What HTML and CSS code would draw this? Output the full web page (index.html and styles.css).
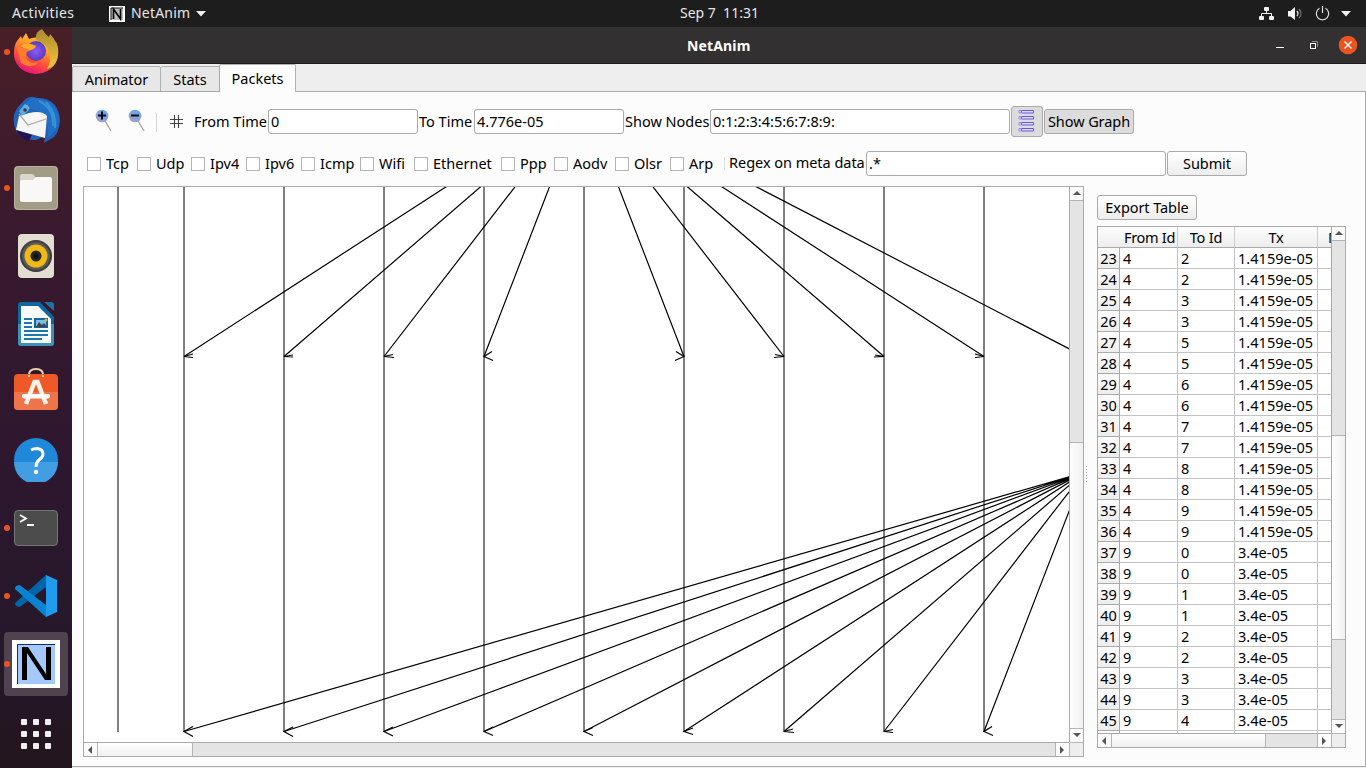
FILE: index.html
```
<!DOCTYPE html>
<html lang="en">
<head>
<meta charset="utf-8">
<title>NetAnim</title>
<link rel="stylesheet" href="styles.css">
</head>
<body>
<header class="topbar">
  <span class="activities">Activities</span>
  <svg class="appicon" width="16" height="16" viewBox="0 0 16 16"><rect width="16" height="16" fill="#fff"/><rect x="2" y="2" width="12" height="12" fill="#bbb"/><path d="M4.500 13V3L11.500 13V3" fill="none" stroke="#000" stroke-width="1.600"/><path d="M2 14V2H14" fill="none" stroke="#111"/></svg>
  <span class="appname">NetAnim</span>
  <svg class="caret" width="10" height="6"><path d="M0 0H10L5 5.500Z" fill="#eee"/></svg>
  <span class="clock">Sep 7&nbsp; 11:31</span>
  <svg class="tray" width="100" height="16" viewBox="0 0 100 16" fill="#f2f2f2">
    <rect x="6" y="1" width="5" height="4" rx="1"/><rect x="1" y="10" width="5" height="4" rx="1"/><rect x="11" y="10" width="5" height="4" rx="1"/>
    <path d="M8.500 4V7.500M3.500 11V7.500H13.500V11" fill="none" stroke="#f2f2f2"/>
    <path d="M30 5H32.500L37 1V14L32.500 10.500H30Z"/>
    <path d="M39 5Q41 7.500 39 10" fill="none" stroke="#ddd" stroke-width="1.300"/><path d="M41 3Q45 7.500 41 12" fill="none" stroke="#777" stroke-width="1.200"/>
    <path d="M61.500 2.300A6.200 6.200 0 1 0 67.500 2.300M64.500 0V7" fill="none" stroke="#ddd" stroke-width="1.200"/>
    <path d="M83 5H93L88 10.500Z"/>
  </svg>
</header>
<div class="desktop">
<nav class="dock">
  <div class="tile run"><svg width="48" height="48" viewBox="0 0 48 48">
    <defs><linearGradient id="ff" x1=".8" y1="0" x2=".3" y2="1"><stop offset="0" stop-color="#f5dc45"/><stop offset=".4" stop-color="#ff9a2b"/><stop offset=".7" stop-color="#ff4a3d"/><stop offset="1" stop-color="#e0127d"/></linearGradient>
    <linearGradient id="fy" x1="0" y1="0" x2="0" y2="1"><stop offset="0" stop-color="#a98a2e"/><stop offset="1" stop-color="#f5c83c"/></linearGradient><radialGradient id="fp"><stop offset="0" stop-color="#9059ff"/><stop offset="1" stop-color="#5b3db8"/></radialGradient></defs>
    <path d="M5 13L9 8L10 11L14 5L17 11Q24 7 34 13L44 14Q47 20 46 27A22 20 0 0 1 2 25Q2 17 5 13Z" fill="url(#ff)"/>
    <path d="M24 8Q24 4 30 1Q33 6 37 9L38 6Q46 14 46 24Q46 38 35 41Q41 30 36 21Q33 15 24 12Z" fill="url(#fy)"/>
    <circle cx="24" cy="23" r="10" fill="url(#fp)"/>
    <path d="M5 19Q12 13 19 17L24 18Q23 21 17 23Q13 24 14 30Q18 37 27 34Q19 42 9 35Z" fill="#ff7b2d"/><path d="M8 18Q16 13 24 18Q23 21 17 22Z" fill="#ffac28"/>
  </svg></div>
  <div class="tile"><svg width="48" height="48" viewBox="0 0 48 48">
    <path d="M4 35Q-3 17 10 7Q16 -2 25 2Q47 2 48 25Q47 36 42 41L32 47L33 40L24 44Q9 45 4 35Z" fill="#2460b5"/>
    <path d="M20 2Q45 2 47 24Q46 36 36 41L35 21Q25 12 14 13Q9 13 12 8Z" fill="#2270c6"/>
    <path d="M27 5Q42 12 41 30M34 6Q45 18 43 32" fill="none" stroke="#3593d8" stroke-width="2"/>
    <path d="M7 20L17 17Q30 14 35 20L33 42L4 34Z" fill="#f6f6f6"/><path d="M7 18L16 29L34 23" fill="none" stroke="#aaa" stroke-width="1.200"/>
    <path d="M4 34L20 39L17 45Q7 43 4 34Z" fill="#241450"/><path d="M7 15L13 8Q20 11 16 15L10 20Z" fill="#58aee5"/><circle cx="13" cy="14" r="1.800" fill="#4a3030"/>
  </svg></div>
  <div class="tile run"><svg width="44" height="44" viewBox="0 0 44 44"><rect width="44" height="44" rx="4" fill="#a29b86"/><rect x=".5" y=".5" width="43" height="43" rx="4" fill="none" stroke="#b9b29e"/><path d="M6 18V10Q6 8 8 8H18Q20 8 21 11H36V20H6Z" fill="#dad6c9"/><path d="M6 16Q6 14 8 14H19L22 11H36Q38 11 38 13V34Q38 36 36 36H8Q6 36 6 34Z" fill="#f9f8f6"/></svg></div>
  <div class="tile"><svg width="36" height="44" viewBox="0 0 36 44"><rect width="36" height="44" rx="4" fill="#e3ded2"/><circle cx="18" cy="22" r="16" fill="#3d3d3d"/><circle cx="18" cy="22" r="14" fill="#595959"/><circle cx="18" cy="22" r="11.500" fill="#efb917"/><circle cx="18" cy="22" r="5.500" fill="#272727"/><circle cx="18" cy="22" r="2.500" fill="#111"/></svg></div>
  <div class="tile"><svg width="36" height="44" viewBox="0 0 36 44"><path d="M3 0H22L36 15V41Q36 44 33 44H3Q0 44 0 41V3Q0 0 3 0Z" fill="#0d68a0"/><path d="M0 22H36V41Q36 44 33 44H3Q0 44 0 41Z" fill="#3e91bd"/><path d="M26 0H33Q36 0 36 3V9Z" fill="#1d72a3"/><path d="M3 4H20L33 17V41H3Z" fill="#f7fafc"/><path d="M6 17H14M6 21H14M6 25H14M6 29H30M6 33H30M6 37H24" stroke="#1b78ac" stroke-width="2"/><rect x="17" y="17" width="12" height="8" fill="#79c0e6" stroke="#1267a0" stroke-width="2"/><path d="M18 25L21 20L24 23L26 21L29 25Z" fill="#444"/><circle cx="28" cy="18" r="1.500" fill="#edb51e"/></svg></div>
  <div class="tile"><svg class="bag" width="44" height="44" viewBox="0 0 44 44"><path d="M15 10V8Q15 2 22 2Q29 2 29 8V10" fill="none" stroke="#ead3a5" stroke-width="2"/><rect y="7" width="44" height="36" rx="4" fill="#ed5a27"/><path d="M0 25H44V39Q44 43 40 43H4Q0 43 0 39Z" fill="#f0744a"/><path d="M15 10V8M29 10V8" stroke="#ead3a5" stroke-width="2"/><path d="M12 37L20.500 15H23.500L32 37" fill="none" stroke="#fff1e8" stroke-width="4.500"/><rect x="8" y="27" width="28" height="4.500" rx="2" fill="#fff"/></svg></div>
  <div class="tile"><svg width="44" height="44" viewBox="0 0 44 44"><circle cx="22" cy="22" r="22" fill="#1f88d9"/><path d="M0 24H44A22 22 0 0 1 0 24Z" fill="#429de2"/><path d="M17 12Q20 10.500 23 10.500Q29 11 29 16Q29 19 25 22Q22 24.500 22 29" fill="none" stroke="#fff" stroke-width="3"/><circle cx="22" cy="34" r="2.200" fill="#fff"/></svg></div>
  <div class="tile run"><svg width="44" height="36" viewBox="0 0 44 36"><rect x=".5" y=".5" width="43" height="35" rx="3.500" fill="#4c4c4c" stroke="#747474"/><path d="M6 5L12 8.500L6 12M13 15H20" fill="none" stroke="#fff" stroke-width="1.800"/></svg></div>
  <div class="tile run"><svg width="42" height="42" viewBox="0 0 42 42"><path d="M0 28Q0 30 1 31L4 32Q5 32 6 31L31 12V0Z" fill="#0065a9"/><path d="M0 14Q0 12 1 11L4 10Q5 10 6 11L31 30V42Z" fill="#0a84d0"/><path d="M31 0L42 5V37L31 42Z" fill="#1f9cf0"/></svg></div>
  <div class="tile run active"><svg width="48" height="48" viewBox="0 0 48 48"><rect width="48" height="48" fill="#fff"/><rect x="5" y="4" width="38" height="40" fill="#a4c8fa"/><path d="M5.500 44V4.500H43" fill="none" stroke="#0b2a83"/><path d="M10 40V7H16L34 34V7H39V40H33L15 13V40Z" fill="#000"/></svg></div>
  <div class="tile"><svg width="30" height="30" viewBox="0 0 30 30" fill="#f0eef0"><rect width="6" height="6" rx="1"/><rect x="12" width="6" height="6" rx="1"/><rect x="24" width="6" height="6" rx="1"/><rect y="12" width="6" height="6" rx="1"/><rect x="12" y="12" width="6" height="6" rx="1"/><rect x="24" y="12" width="6" height="6" rx="1"/><rect y="24" width="6" height="6" rx="1"/><rect x="12" y="24" width="6" height="6" rx="1"/><rect x="24" y="24" width="6" height="6" rx="1"/></svg></div>
</nav>
<main class="window">
  <div class="titlebar">
    <span class="title">NetAnim</span>
    <svg class="winctl" width="88" height="20" viewBox="0 0 88 20"><path d="M6 12.500H14" stroke="#fff"/><path d="M42 6.500H47.500V12" fill="none" stroke="#888"/><rect x="40.500" y="8.500" width="5" height="5" fill="none" stroke="#fff"/><circle cx="78" cy="10" r="9.300" fill="#e95420"/><path d="M74.500 6.500L81.500 13.500M81.500 6.500L74.500 13.500" stroke="#fff" stroke-width="1.400"/></svg>
  </div>
  <div class="tabs"><div class="tab t1">Animator</div><div class="tab t2">Stats</div><div class="tab t3 on">Packets</div></div>
  <div class="page">
    <div class="row row1">
      <svg class="zooms" width="84" height="30" viewBox="0 0 84 30">
        <defs><linearGradient id="lens" x1="1" y1="0" x2="0" y2="1"><stop offset=".2" stop-color="#64a5f5"/><stop offset="1" stop-color="#b4a0b8"/></linearGradient></defs>
        <path d="M20.500 13L27 24M53.500 13L60 24" stroke="#b79da2" stroke-width="1.400"/><circle cx="18" cy="9" r="6.300" fill="url(#lens)"/><circle cx="51" cy="9" r="6.300" fill="url(#lens)"/>
        <path d="M14 8.500H22M18 4.500V12.500M47 8.500H55" stroke="#060b14" stroke-width="2"/><path d="M72.500 6V25" stroke="#d6d6d6"/>
      </svg>
      <svg class="hash" width="27" height="30" viewBox="0 0 27 30"><path d="M11.500 8V21M15.500 8V21M7 12.500H20M7 16.500H20" stroke="#444" stroke-width="1.100"/></svg>
      <span class="lab l1">From Time</span><div class="field w150">0</div>
      <span class="lab l2">To Time</span><div class="field w150">4.776e-05</div>
      <span class="lab l3">Show Nodes</span><div class="field w300 nodes">0:1:2:3:4:5:6:7:8:9:</div>
      <div class="btn down iconbtn"><svg width="16" height="24" viewBox="0 0 16 24" fill="#dcdcff" stroke="#6d55e6"><path d="M3.500 1.500H15.500V4H3.500ZM3.500 7.500H15.500V10H3.500ZM3.500 13.500H15.500V16H3.500ZM3.500 19.500H15.500V22H3.500Z"/><path d="M1 1.500H3V4H1ZM1 7.500H3V10H1ZM1 13.500H3V16H1ZM1 19.500H3V22H1Z" stroke="#9d8ff0"/></svg></div>
      <div class="btn down graphbtn">Show Graph</div>
    </div>
    <div class="row row2">
      <div class="ck k50"><i></i><span>Tcp</span></div><div class="ck k54"><i></i><span>Udp</span></div><div class="ck k55"><i></i><span>Ipv4</span></div><div class="ck k55"><i></i><span>Ipv6</span></div><div class="ck k59"><i></i><span>Icmp</span></div><div class="ck k54"><i></i><span>Wifi</span></div><div class="ck k87"><i></i><span>Ethernet</span></div><div class="ck k53"><i></i><span>Ppp</span></div><div class="ck k61"><i></i><span>Aodv</span></div><div class="ck k55"><i></i><span>Olsr</span></div><div class="ck k54"><i></i><span>Arp</span></div>
      <span class="lab regex">Regex on meta data</span><div class="field w300">.*</div><div class="btn submit">Submit</div>
    </div>
    <div class="content">
      <section class="view">
        <svg class="plot" width="985" height="555" viewBox="84 187 985 555">
          <g stroke="#000"><path d="M118 187V732M184 187V732M284 187V732M384 187V732M484 187V732M584 187V732M684 187V732M784 187V732M884 187V732M984 187V732"/></g>
          <g stroke="#000" fill="none" stroke-width="1.200">
            <path d="M584 97.500L184 356.500M584 97.500L284 356.500M584 97.500L384 356.500M584 97.500L484 356.500M584 97.500L684 356.500M584 97.500L784 356.500M584 97.500L884 356.500M584 97.500L984 356.500M584 97.500L1084 356.500"/>
            <path d="M1084 472.500L184 731.500M1084 472.500L284 731.500M1084 472.500L384 731.500M1084 472.500L484 731.500M1084 472.500L584 731.500M1084 472.500L684 731.500M1084 472.500L784 731.500M1084 472.500L884 731.500M1084 472.500L984 731.500"/>
            <path d="M193 354L184 356.500L193 357.500M293 355L284 356.500L293 357M393 354.500L384 356.500L394 357.500M492 351.500L484 356.500L493 360.500M676 351.500L684 356.500L675 360.500M775 354.500L784 356.500L774 357.500M875 355L884 356.500L874 357M975 354L984 356.500L975 357.500"/>
            <path d="M193 726.500L184 731.500L193 736.500M293 727L284 731.500L293 736.500M393 727L384 731.500L393 736M493 727L484 731.500L493 735.500M593 727.500L584 731.500L593 735.500M693 728L684 731.500L693 734.500M793 729L784 731.500L794 732.500M893 729.500L884 731.500L893 732.500M992 726.500L984 731.500L993 735.500"/>
          </g>
        </svg>
        <div class="vbar"><b class="up"></b><u class="g241"></u><s></s><b class="dn"></b></div>
        <div class="hbar"><b class="lf"></b><s class="s94"></s><u></u><b class="rt"></b></div>
        <div class="corner"></div>
      </section>
      <div class="split"></div>
      <aside class="side">
        <div class="btn export">Export Table</div>
        <div class="grid">
          <div class="clip"><table>
            <tr><th class="c0"></th><th class="c1">From Id</th><th class="c2">To Id</th><th class="c3">Tx</th><th class="c4">M</th></tr>
            <tr><th>23</th><td>4</td><td>2</td><td>1.4159e-05</td><td></td></tr>
            <tr><th>24</th><td>4</td><td>2</td><td>1.4159e-05</td><td></td></tr>
            <tr><th>25</th><td>4</td><td>3</td><td>1.4159e-05</td><td></td></tr>
            <tr><th>26</th><td>4</td><td>3</td><td>1.4159e-05</td><td></td></tr>
            <tr><th>27</th><td>4</td><td>5</td><td>1.4159e-05</td><td></td></tr>
            <tr><th>28</th><td>4</td><td>5</td><td>1.4159e-05</td><td></td></tr>
            <tr><th>29</th><td>4</td><td>6</td><td>1.4159e-05</td><td></td></tr>
            <tr><th>30</th><td>4</td><td>6</td><td>1.4159e-05</td><td></td></tr>
            <tr><th>31</th><td>4</td><td>7</td><td>1.4159e-05</td><td></td></tr>
            <tr><th>32</th><td>4</td><td>7</td><td>1.4159e-05</td><td></td></tr>
            <tr><th>33</th><td>4</td><td>8</td><td>1.4159e-05</td><td></td></tr>
            <tr><th>34</th><td>4</td><td>8</td><td>1.4159e-05</td><td></td></tr>
            <tr><th>35</th><td>4</td><td>9</td><td>1.4159e-05</td><td></td></tr>
            <tr><th>36</th><td>4</td><td>9</td><td>1.4159e-05</td><td></td></tr>
            <tr><th>37</th><td>9</td><td>0</td><td>3.4e-05</td><td></td></tr>
            <tr><th>38</th><td>9</td><td>0</td><td>3.4e-05</td><td></td></tr>
            <tr><th>39</th><td>9</td><td>1</td><td>3.4e-05</td><td></td></tr>
            <tr><th>40</th><td>9</td><td>1</td><td>3.4e-05</td><td></td></tr>
            <tr><th>41</th><td>9</td><td>2</td><td>3.4e-05</td><td></td></tr>
            <tr><th>42</th><td>9</td><td>2</td><td>3.4e-05</td><td></td></tr>
            <tr><th>43</th><td>9</td><td>3</td><td>3.4e-05</td><td></td></tr>
            <tr><th>44</th><td>9</td><td>3</td><td>3.4e-05</td><td></td></tr>
            <tr><th>45</th><td>9</td><td>4</td><td>3.4e-05</td><td></td></tr>
            <tr><th></th><td></td><td></td><td></td><td></td></tr>
          </table></div>
          <div class="vbar"><b class="up"></b><u class="g195"></u><s class="s203"></s><u></u><b class="dn"></b></div>
          <div class="hbar"><b class="lf"></b><s class="s154"></s><u></u><b class="rt"></b></div>
          <div class="corner"></div>
        </div>
      </aside>
    </div>
  </div>
</main>
</div>
</body>
</html>
```
FILE: styles.css
```
* { box-sizing: border-box; }
body { margin: 0; width: 1366px; height: 768px; overflow: hidden; font: 14.5px/20px "Noto Sans", "Open Sans", sans-serif; color: #000; white-space: nowrap; }
svg { display: block; flex: none; }
.topbar { height: 27px; background: #1d1d1d; color: #e6e6e6; display: flex; align-items: center; padding-left: 12px; font-size: 14px; }
.topbar span { padding-bottom: 2px; }
.activities { width: 97px; letter-spacing: .4px; }
.appname { margin-left: 6px; width: 65px; letter-spacing: .2px; }
.clock { margin-left: 474px; width: 80px; }
.tray { margin-left: 498px; }
.desktop { display: flex; height: 741px; }
.dock { width: 72px; flex: none; overflow: hidden; background: linear-gradient(#481f27, #38192e 30%, #2d172f 60%, #251829 85%, #23151d); display: flex; flex-direction: column; gap: 4px; padding-left: 4px; }
.tile { position: relative; width: 64px; height: 64px; flex: none; display: flex; align-items: center; justify-content: center; border-radius: 4px; }
.tile:first-child { margin-top: -7px; }
.tile:last-child { margin-top: 2px; }
.tile.active { background: #50434f; }
.tile.run::before { content: ""; position: absolute; left: 0; top: 29px; width: 6px; height: 6px; border-radius: 50%; background: #e95420; }
.bag { margin-top: -7px; }
.window { flex: 1; display: flex; flex-direction: column; background: #eee; }
.titlebar { height: 37px; flex: none; background: #333031; border-bottom: 1px solid #1c1a1b; color: #fff; display: flex; align-items: center; font-weight: bold; font-size: 14px; }
.title { margin-left: 615px; width: 65px; padding-top: 1px; letter-spacing: .15px; }
.winctl { margin-left: 518px; }
.tabs { height: 28px; flex: none; display: flex; align-items: flex-end; }
.tab { height: 26px; border: 1px solid #b0b0b0; background: #e7e7e7; border-radius: 2px 2px 0 0; line-height: 24px; text-align: center; }
.t1 { width: 89px; }
.t2 { width: 59px; border-left: 0; }
.tab.on { position: relative; width: 77px; height: 28px; border-left-color: #aaa; border-bottom: 0; background: #fcfcfc; margin-left: -1px; line-height: 26px; }
.page { flex: 1; margin-top: -1px; margin-bottom: 1px; border: 1px solid #aaa; border-left: 0; background: #fcfcfc; }
.row { display: flex; align-items: center; }
.row1 { height: 31px; margin-top: 14px; padding-left: 12px; }
.row2 { height: 25px; margin-top: 14px; padding-left: 15px; }
.hash { margin-left: -5px; }
.lab { flex: none; }
.l1, .l2, .l3 { padding-bottom: 2px; }
.l1 { width: 78px; padding-left: 4px; }
.l2 { width: 56px; padding-left: 1px; }
.l3 { width: 86px; padding-left: 1px; }
.regex { width: 142px; padding-left: 4px; border-left: 1px solid #ddd; height: 13px; line-height: 11px; letter-spacing: -.03px; }
.field { flex: none; height: 25px; border: 1px solid #aaa; border-radius: 3px; background: #fff; padding-left: 2px; line-height: 22px; }
.w150 { width: 150px; }
.w300 { width: 300px; }
.btn { flex: none; height: 25px; border: 1px solid #aaa; border-radius: 3px; background: linear-gradient(#fff, #ededed); display: flex; align-items: center; justify-content: center; padding-bottom: 2px; letter-spacing: -.08px; }
.btn.down { background: #dcdcdc; }
.btn.iconbtn { width: 32px; height: 31px; margin: 0 1px; padding: 0 2px 2px 0; }
.graphbtn { width: 90px; }
.submit { width: 80px; margin-left: 1px; }
.ck { flex: none; display: flex; align-items: center; }
.ck i { width: 14px; height: 14px; margin-right: 5px; border: 1px solid #b4b4b4; background: #fff; }
.ck span { padding-bottom: 2px; }
.k50 { width: 50px; } .k53 { width: 53px; } .k54 { width: 54px; } .k55 { width: 55px; } .k59 { width: 59px; } .k61 { width: 61px; } .k87 { width: 87px; }
.content { display: flex; padding: 10px 0 0 11px; }
.view, .grid { border: 1px solid #aaa; display: grid; overflow: hidden; background: #fff; }
.view { width: 1001px; height: 571px; grid-template: 555px 14px / 985px 14px; }
.grid { width: 249px; height: 522px; grid-template: 506px 14px / 233px 14px; margin-top: 6px; }
.vbar, .hbar { display: flex; background: #e4e4e4; border: 0 solid #aaa; }
.vbar { flex-direction: column; border-left-width: 1px; }
.hbar { border-top-width: 1px; }
.vbar b, .hbar b { width: 13px; height: 13px; flex: none; background: #fbfbfb; display: flex; align-items: center; justify-content: center; }
.vbar s { flex: 1; background: linear-gradient(90deg, #fff, #f0f0f0); border: 1px solid #b5b5b5; border-width: 1px 0 0; }
.hbar s { flex: none; background: linear-gradient(#fff, #f0f0f0); border-right: 1px solid #b5b5b5; }
.vbar u, .hbar u { flex: 1; }
.vbar .g241, .vbar .g195, .vbar .s203 { flex: none; }
.vbar .s203 { border-bottom-width: 1px; }
.g241 { height: 241px; } .g195 { height: 194px; } .s203 { height: 205px; }
.s94 { width: 95px; } .s154 { width: 154px; }
b::before { content: ""; border: 4px solid transparent; }
.vbar .up { height: 14px; border-bottom: 1px solid #b5b5b5; padding-bottom: 2px; }
.vbar .dn { height: 14px; border-top: 1px solid #b5b5b5; padding-bottom: 1px; }
.hbar .lf { width: 14px; border-right: 1px solid #b5b5b5; padding-right: 2px; }
.hbar .rt { width: 14px; border-left: 1px solid #b5b5b5; padding-right: 1px; }
.up::before { border-bottom-color: #555; border-top: 0; }
.dn::before { border-top-color: #555; border-bottom: 0; }
.lf::before { border-right-color: #555; border-left: 0; }
.rt::before { border-left-color: #555; border-right: 0; }
.corner { background: #eee; border: 1px solid #b5b5b5; border-width: 1px 0 0 1px; }
.split { width: 13px; background: radial-gradient(circle, #aaa .6px, transparent .9px) 1px 0 / 3px 3px; background-repeat: repeat-y; height: 18px; margin-top: 279px; }
.side { padding-top: 9px; }
.export { width: 100px; }
.clip { overflow: hidden; }
table { border-collapse: separate; border-spacing: 0; table-layout: fixed; width: 251px; }
tr { height: 21px; }
th, td { height: 21px; padding: 0 0 0 3px; border: 1px solid #c3c3c3; border-width: 0 1px 1px 0; line-height: 20px; font-weight: normal; text-align: left; letter-spacing: .04px; }
th { background: linear-gradient(#fdfdfd, #ededed); text-align: center; padding: 0; border-color: #aaa; }
tr:first-child th { border-right-color: #ccc; letter-spacing: -.15px; }
tr:first-child .c0 { width: 22px; border-right: 0; }
.c1 { width: 58px; }
tr:first-child .c1 { text-align: left; padding-left: 4px; letter-spacing: -.3px; }
.c2 { width: 57px; }
.c3 { width: 83px; }
tr:first-child .c4 { width: 31px; text-align: left; padding-left: 10px; }
```
